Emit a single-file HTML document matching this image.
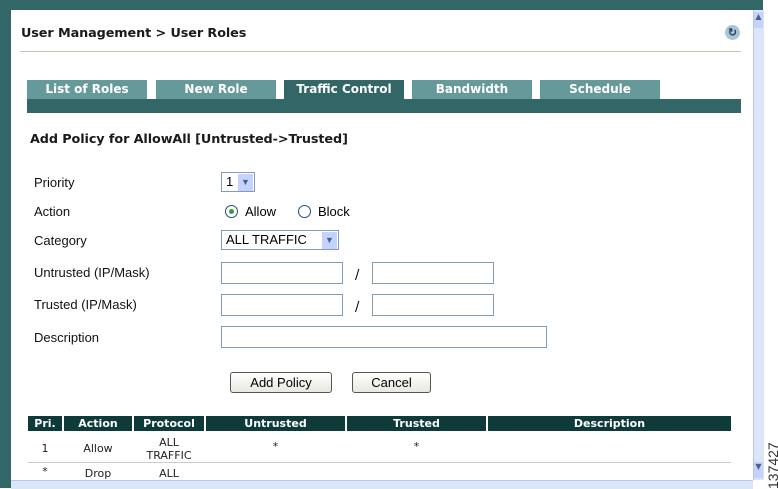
<!DOCTYPE html>
<html><head><style>
body{margin:0;width:778px;height:488px;overflow:hidden;background:#fff;position:relative;font-family:Tahoma,"DejaVu Sans",sans-serif;}
.a{position:absolute}
.tab{position:absolute;top:80px;height:19px;width:120px;background:#669999;color:#fff;font-weight:bold;font-size:12px;text-align:center;line-height:19px;font-family:"DejaVu Sans",sans-serif}
.lbl{position:absolute;left:34px;font-size:13px;color:#111;font-family:"Liberation Sans",sans-serif}
.inp{position:absolute;height:20px;border:1px solid #7f9db9;box-sizing:border-box;background:#fff}
.th{position:absolute;top:416px;height:15px;background:#0f3a3a;color:#fff;font-weight:bold;font-size:11px;text-align:center;line-height:15px;font-family:"DejaVu Sans",sans-serif}
.td{position:absolute;font-size:11px;text-align:center;color:#222;font-family:"DejaVu Sans",sans-serif}
.btn{position:absolute;top:372px;height:21px;border:1px solid #555;border-radius:3px;background:linear-gradient(#fff,#e8e8e0);font-size:13px;text-align:center;line-height:19px;box-sizing:border-box;font-family:"Liberation Sans",sans-serif}
.dd{position:absolute;width:15px;height:17px;background:#c3d3fd;top:1px;right:1px;color:#4d6185;font-size:9px;text-align:center;line-height:17px}
</style></head><body>
<div class="a" style="left:0;top:0;width:763px;height:10px;background:#336666"></div>
<div class="a" style="left:0;top:10px;width:11px;height:478px;background:#336666"></div>
<div class="a" style="left:753px;top:10px;width:10px;height:470px;background:#dce4f8;border-left:1px solid #b8c6ee"></div>
<div class="a" style="left:754px;top:12px;width:9px;height:16px;background:#c3d3fd;color:#4d6185;font-size:8px;text-align:center">▲</div>
<div class="a" style="left:754px;top:462px;width:9px;height:16px;background:#c3d3fd;color:#4d6185;font-size:8px;text-align:center">▼</div>
<div class="a" style="left:11px;top:480px;width:742px;height:8px;background:#dce4f8;border-top:1px solid #b8c6ee"></div>
<div class="a" style="left:765px;top:489px;font-size:14px;color:#333;transform:rotate(-90deg);transform-origin:0 0;font-family:'Liberation Sans',sans-serif">137427</div>

<div class="a" style="left:21px;top:26px;font-size:12.8px;font-weight:bold;color:#1a1a1a;font-family:'DejaVu Sans',sans-serif;letter-spacing:-0.1px">User Management &gt; User Roles</div>
<div class="a" style="left:20px;top:51px;width:721px;height:1px;background:#c8c0b0"></div>
<div class="a" style="left:725px;top:25px;width:15px;height:15px;border-radius:50%;background:#a9c4d6;color:#1d3b58;font-size:11px;text-align:center;line-height:15px;font-weight:bold">↻</div>

<div class="tab" style="left:27px">List of Roles</div>
<div class="tab" style="left:156px">New Role</div>
<div class="tab" style="left:284px;background:#336666">Traffic Control</div>
<div class="tab" style="left:412px">Bandwidth</div>
<div class="tab" style="left:540px">Schedule</div>
<div class="a" style="left:27px;top:99px;width:714px;height:14px;background:#336666"></div>

<div class="a" style="left:30px;top:132px;font-size:12.8px;font-weight:bold;color:#1a1a1a;font-family:'DejaVu Sans',sans-serif;letter-spacing:-0.1px">Add Policy for AllowAll [Untrusted-&gt;Trusted]</div>

<div class="lbl" style="top:175px">Priority</div>
<div class="lbl" style="top:204px">Action</div>
<div class="lbl" style="top:233px">Category</div>
<div class="lbl" style="top:265px">Untrusted (IP/Mask)</div>
<div class="lbl" style="top:297px">Trusted (IP/Mask)</div>
<div class="lbl" style="top:330px">Description</div>

<div class="inp" style="left:221px;top:172px;width:34px;font-size:13px;padding-left:4px;line-height:18px;font-family:'Liberation Sans',sans-serif">1<div class="dd">▼</div></div>
<div class="a" style="left:225px;top:205px;width:11px;height:11px;border:1px solid #1c5180;border-radius:50%;background:#fff"><div class="a" style="left:3px;top:3px;width:5px;height:5px;border-radius:50%;background:#3c9a3c"></div></div>
<div class="a" style="left:245px;top:204px;font-size:13px;font-family:'Liberation Sans',sans-serif">Allow</div>
<div class="a" style="left:298px;top:205px;width:11px;height:11px;border:1px solid #1c5180;border-radius:50%;background:#fff"></div>
<div class="a" style="left:318px;top:204px;font-size:13px;font-family:'Liberation Sans',sans-serif">Block</div>
<div class="inp" style="left:221px;top:230px;width:118px;font-size:13px;padding-left:4px;line-height:18px;font-family:'Liberation Sans',sans-serif">ALL TRAFFIC<div class="dd">▼</div></div>

<div class="inp" style="left:221px;top:262px;width:122px;height:22px"></div>
<div class="a" style="left:355px;top:268px;font-size:13px">/</div>
<div class="inp" style="left:372px;top:262px;width:122px;height:22px"></div>
<div class="inp" style="left:221px;top:294px;width:122px;height:22px"></div>
<div class="a" style="left:355px;top:300px;font-size:13px">/</div>
<div class="inp" style="left:372px;top:294px;width:122px;height:22px"></div>
<div class="inp" style="left:221px;top:326px;width:326px;height:22px"></div>

<div class="btn" style="left:230px;width:102px">Add Policy</div>
<div class="btn" style="left:352px;width:79px">Cancel</div>

<div class="th" style="left:28px;width:34px">Pri.</div>
<div class="th" style="left:64px;width:68px">Action</div>
<div class="th" style="left:134px;width:70px">Protocol</div>
<div class="th" style="left:206px;width:139px">Untrusted</div>
<div class="th" style="left:347px;width:139px">Trusted</div>
<div class="th" style="left:488px;width:243px">Description</div>

<div class="td" style="left:28px;width:34px;top:442px">1</div>
<div class="td" style="left:64px;width:68px;top:442px">Allow</div>
<div class="td" style="left:134px;width:70px;top:436px;line-height:13px">ALL<br>TRAFFIC</div>
<div class="td" style="left:206px;width:139px;top:440px">*</div>
<div class="td" style="left:347px;width:139px;top:440px">*</div>
<div class="a" style="left:28px;top:462px;width:703px;height:1px;background:#ccc"></div>
<div class="td" style="left:28px;width:34px;top:465px">*</div>
<div class="td" style="left:64px;width:68px;top:467px">Drop</div>
<div class="td" style="left:134px;width:70px;top:467px">ALL</div>
</body></html>
